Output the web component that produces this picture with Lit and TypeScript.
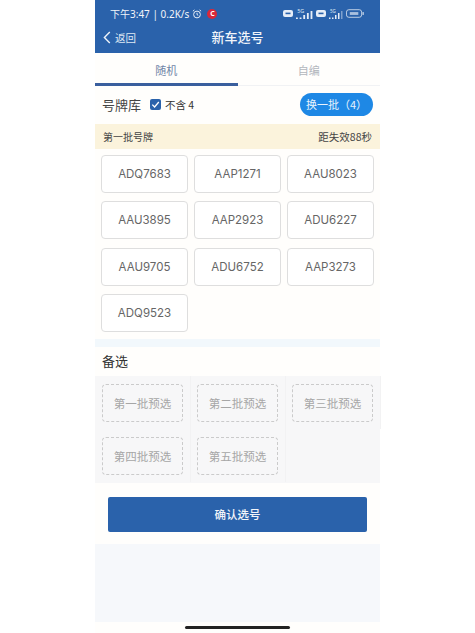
import { LitElement, html, css, svg } from "lit";
import { customElement } from "lit/decorators.js";

const PLATES = ["ADQ7683","AAP1271","AAU8023","AAU3895","AAP2923","ADU6227","AAU9705","ADU6752","AAP3273","ADQ9523"];
const SPARE = ["第一批预选","第二批预选","第三批预选","第四批预选","第五批预选"];

const sim = svg`<rect x="0" y="1" width="10" height="7" rx="2" fill="#e6edf7"/><rect x="2.5" y="3.6" width="5" height="1.6" fill="#2a62ab"/>`;
const bars = (dim: boolean) => svg`
  <text x="1" y="4" font-size="4.5" fill="#dfe8f4" font-family="Noto Sans, sans-serif">5G</text>
  <rect x="0" y="8.5" width="1.5" height="1.5" fill="#e6edf7"/>
  <rect x="3" y="8.5" width="1.5" height="1.5" fill="#e6edf7"/>
  <rect x="6" y="6" width="1.5" height="4" fill="#e6edf7"/>
  <rect x="9" y="4" width="1.5" height="6" fill="#e6edf7"/>
  <rect x="12" y="2" width="1.5" height="8" fill="#e6edf7" opacity="${dim ? 0.45 : 1}"/>`;

@customElement("app-root")
export class AppRoot extends LitElement {
  static styles = css`
    :host { display: block; width: 475px; height: 633px; background: #fff; font-family: "Noto Sans CJK SC", "Noto Sans", sans-serif; overflow: hidden; }
    .phone { width: 285px; margin-left: 95px; display: flex; flex-direction: column; background: #fffefc; }
    .head { height: 53px; background: #2a62ab; color: #f2f5fa; display: flex; flex-direction: column; }
    .status { height: 24px; padding: 3px 16px 0 15px; display: flex; align-items: center; justify-content: space-between; font-size: 10px; font-family: "Noto Sans", "Noto Sans CJK SC", sans-serif; box-sizing: border-box; }
    .status-left { display: flex; align-items: center; gap: 3px; }
    .status-right { display: flex; align-items: center; gap: 3px; }
    .rec { width: 10px; height: 10px; border-radius: 50%; background: #d8283a; color: #fff; font-size: 7px; line-height: 10px; text-align: center; font-weight: 700; margin-left: 2px; }
    .nav { flex: 1; position: relative; display: flex; align-items: center; justify-content: center; font-size: 13px; font-weight: 500; padding-bottom: 5px; }
    .back { position: absolute; left: 8px; top: 1px; display: flex; align-items: center; gap: 4px; font-size: 10.5px; font-weight: 400; color: #dfe8f4; height: 24px; }
    .tabs { height: 33px; display: flex; font-size: 11px; border-bottom: 1px solid #f1f2f4; box-sizing: border-box; }
    .tab { width: 142.5px; display: flex; align-items: center; justify-content: center; color: #b2b6bc; box-sizing: border-box; padding-top: 1px; }
    .tab.on { color: #6f84a6; border-bottom: 3px solid #3a5f9e; margin-bottom: -1px; padding-top: 3px; }
    .lib { height: 38px; padding: 0 7px 2px 7px; display: flex; align-items: center; font-size: 13px; color: #444; box-sizing: border-box; }
    .check { width: 11px; height: 11px; border-radius: 2px; background: #2a62ab; margin-left: 9px; margin-right: 4px; display: flex; }
    .no4 { font-size: 10.5px; color: #333; }
    .swap { margin-left: auto; width: 73px; height: 23px; border-radius: 12px; background: #1e88e5; color: #e8f3fd; font-size: 11px; display: flex; align-items: center; justify-content: center; }
    .batch { height: 25px; background: #fbf3dc; padding: 0 8px; display: flex; align-items: center; justify-content: space-between; font-size: 10px; color: #444; }
    .batch span:last-child { font-size: 10.5px; }
    .plates { display: grid; grid-template-columns: repeat(3, 87px); gap: 8.4px 6px; padding: 6px 6px 7px 6px; }
    .plate { height: 38px; border: 1.3px solid #dedede; border-radius: 4px; box-sizing: border-box; display: flex; align-items: center; justify-content: center; font-family: "Inter", "Noto Sans", sans-serif; font-size: 11.5px; color: #666; background: #fff; }
    .rule { height: 8px; background: #f2f8fc; }
    .spare-t { height: 29px; padding-left: 7px; padding-bottom: 2px; box-sizing: border-box; display: flex; align-items: center; font-size: 13px; color: #333; }
    .panel { height: 107px; background: #f7f7f8; display: grid; grid-template-columns: 95px 95px 95px; grid-auto-rows: 53px; }
    .cell { display: flex; align-items: center; justify-content: center; padding-top: 1px; box-sizing: border-box; box-shadow: 1px 0 0 #f2f2f3; }
    .slot { width: 81px; height: 38px; border: 1px dashed #cbcbcb; border-radius: 4px; box-sizing: border-box; display: flex; align-items: center; justify-content: center; font-size: 11.5px; color: #a6a6a6; }
    .foot { height: 61px; display: flex; align-items: center; justify-content: center; padding-top: 1px; box-sizing: border-box; }
    .confirm { width: 259px; height: 35px; border-radius: 2px; background: #2a62ab; color: #f2f5fa; font-size: 11.5px; font-weight: 500; display: flex; align-items: center; justify-content: center; }
    .pale { height: 78px; background: #f6f8fb; }
    .home { height: 11px; display: flex; justify-content: center; align-items: center; }
    .home i { display: block; width: 105px; height: 3px; border-radius: 2px; background: #222; }
  `;

  render() {
    return html`<div class="phone">
      <div class="head">
        <div class="status">
          <div class="status-left">
            <span>下午3:47 | 0.2K/s</span>
            <svg width="10" height="10" viewBox="0 0 10 10" fill="none" stroke="#e6edf7" stroke-width="1"><circle cx="5" cy="5.5" r="3.4"/><path d="M5 3.8V5.6L6.2 6.3M.9 2.2 2.4.9M9.1 2.2 7.6.9"/></svg>
            <span class="rec">C</span>
          </div>
          <div class="status-right">
            <svg width="10" height="9" viewBox="0 0 10 9">${sim}</svg>
            <svg width="17" height="10" viewBox="0 0 14 10" preserveAspectRatio="none">${bars(false)}</svg>
            <svg width="10" height="9" viewBox="0 0 10 9">${sim}</svg>
            <svg width="14" height="10" viewBox="0 0 14 10">${bars(true)}</svg>
            <svg width="18" height="9" viewBox="0 0 19 9" fill="none"><rect x=".5" y=".5" width="16" height="8" rx="2.5" stroke="#c5d4e8"/><rect x="17.4" y="3" width="1.4" height="3" fill="#c5d4e8"/><rect x="4" y="3" width="9" height="3" fill="#dfe8f4" opacity=".7"/></svg>
          </div>
        </div>
        <div class="nav">
          <div class="back">
            <svg width="8" height="13" viewBox="0 0 8 13" fill="none" stroke="#eef3f9" stroke-width="1.4"><path d="M6.8 1 1.4 6.5 6.8 12"/></svg>
            <span>返回</span>
          </div>
          新车选号
        </div>
      </div>
      <div class="tabs"><div class="tab on">随机</div><div class="tab">自编</div></div>
      <div class="lib">
        <span>号牌库</span>
        <span class="check"><svg width="11" height="11" viewBox="0 0 11 11" fill="none" stroke="#fff" stroke-width="1.3"><path d="M2.3 5.6 4.6 8 8.8 3"/></svg></span>
        <span class="no4">不含 4</span>
        <span class="swap">换一批（4）</span>
      </div>
      <div class="batch"><span>第一批号牌</span><span>距失效88秒</span></div>
      <div class="plates">${PLATES.map((p) => html`<div class="plate">${p}</div>`)}</div>
      <div class="rule"></div>
      <div class="spare-t">备选</div>
      <div class="panel">${SPARE.map((s) => html`<div class="cell"><div class="slot">${s}</div></div>`)}</div>
      <div class="foot"><div class="confirm">确认选号</div></div>
      <div class="pale"></div>
      <div class="home"><i></i></div>
    </div>`;
  }
}
